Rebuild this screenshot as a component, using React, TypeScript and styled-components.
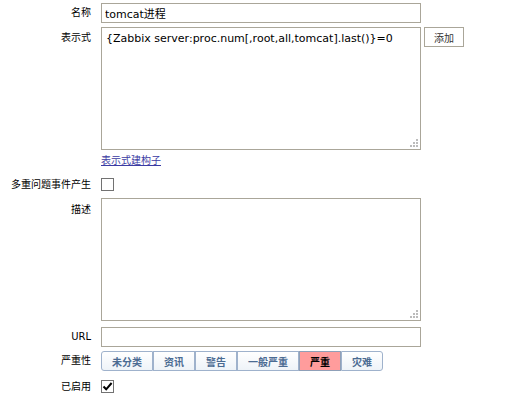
import React from 'react';
import styled, { createGlobalStyle } from 'styled-components';

const GlobalStyle = createGlobalStyle`
  html, body {
    margin: 0;
    padding: 0;
    background: #ffffff;
  }
  body {
    font-family: "DejaVu Sans", "Noto Sans CJK SC", sans-serif;
    font-size: 11px;
    color: #000;
  }
`;

const Form = styled.div`
  padding-top: 3px;
  width: 510px;
`;

const Row = styled.div<{ $top?: number; $center?: boolean }>`
  display: grid;
  grid-template-columns: 91px auto;
  column-gap: 10px;
  align-items: ${(p) => (p.$center ? 'center' : 'start')};
  margin-top: ${(p) => p.$top ?? 0}px;
`;

const Label = styled.div<{ $pad?: number }>`
  text-align: right;
  font-size: 10px;
  line-height: 12px;
  padding-top: ${(p) => p.$pad ?? 0}px;
  white-space: nowrap;
  font-family: "DejaVu Sans", "Noto Sans CJK SC", sans-serif;
`;

const Field = styled.div`
  display: flex;
  align-items: flex-start;
  gap: 2px;
`;

const TextInput = styled.input`
  box-sizing: border-box;
  width: 320px;
  height: 20px;
  margin: 0;
  padding: 0 3px;
  border: 1px solid #aaa699;
  font-family: "DejaVu Sans", "Noto Sans CJK SC", sans-serif;
  font-size: 11px;
  color: #000;
  background: #fff;
  outline: none;
`;

const AreaWrap = styled.div`
  position: relative;
  width: 320px;
  height: 123px;
`;

const Area = styled.textarea`
  box-sizing: border-box;
  width: 100%;
  height: 100%;
  margin: 0;
  padding: 4px 4px;
  border: 1px solid #aaa699;
  font-family: "DejaVu Sans", "Noto Sans CJK SC", sans-serif;
  font-size: 11px;
  line-height: 14px;
  color: #000;
  background: #fff;
  resize: none;
  outline: none;
  display: block;
`;

const Grip = styled.svg`
  position: absolute;
  right: 3px;
  bottom: 3px;
  width: 8px;
  height: 8px;
`;

const PlainButton = styled.button`
  box-sizing: border-box;
  height: 20px;
  width: 40px;
  margin: 0 0 0 1px;
  padding: 0;
  border: 1px solid #aaa699;
  background: #fff;
  color: #333;
  font-family: "DejaVu Sans", "Noto Sans CJK SC", sans-serif;
  font-size: 10px;
`;

const BuilderLink = styled.a`
  display: inline-block;
  font-size: 10px;
  line-height: 14px;
  color: #3b3ba3;
  text-decoration: underline;
  cursor: pointer;
`;

const Check = styled.span`
  box-sizing: border-box;
  display: inline-flex;
  align-items: center;
  justify-content: center;
  width: 13px;
  height: 13px;
  border: 1px solid #727272;
  background: #fff;
`;

const Segments = styled.div`
  display: flex;
`;

const Segment = styled.button<{ $active?: boolean }>`
  box-sizing: border-box;
  height: 20px;
  margin: 0;
  padding: 0 10px;
  border: 1px solid ${(p) => (p.$active ? '#8fa0b8' : '#9fb2cc')};
  background: ${(p) =>
    p.$active ? '#ff9c9c' : 'linear-gradient(#ffffff, #eef3f8)'};
  color: ${(p) => (p.$active ? '#000' : '#4b6b92')};
  font-family: "DejaVu Sans", "Noto Sans CJK SC", sans-serif;
  font-size: 10px;
  font-weight: bold;
  &:first-child {
    border-radius: 3px 0 0 3px;
  }
  &:last-child {
    border-radius: 0 3px 3px 0;
  }
`;

function ResizeGrip() {
  const dots = [
    [6, 0],
    [3, 3],
    [6, 3],
    [0, 6],
    [3, 6],
    [6, 6],
  ];
  return (
    <Grip viewBox="0 0 8 8">
      {dots.map(([x, y]) => (
        <rect key={`${x}-${y}`} x={x} y={y} width={2} height={2} fill="#bcbcbc" />
      ))}
    </Grip>
  );
}

const severities = ['未分类', '资讯', '警告', '一般严重', '严重', '灾难'];

export default function App() {
  return (
    <>
      <GlobalStyle />
      <Form>
        <Row $center>
          <Label>名称</Label>
          <Field>
            <TextInput defaultValue="tomcat进程" />
          </Field>
        </Row>
        <Row $top={4}>
          <Label $pad={5}>表示式</Label>
          <Field>
            <AreaWrap>
              <Area defaultValue="{Zabbix server:proc.num[,root,all,tomcat].last()}=0" />
              <ResizeGrip />
            </AreaWrap>
            <PlainButton>添加</PlainButton>
          </Field>
        </Row>
        <Row $top={4}>
          <Label />
          <Field>
            <BuilderLink>表示式建构子</BuilderLink>
          </Field>
        </Row>
        <Row $top={10} $center>
          <Label>多重问题事件产生</Label>
          <Field>
            <Check />
          </Field>
        </Row>
        <Row $top={7}>
          <Label $pad={6}>描述</Label>
          <Field>
            <AreaWrap>
              <Area />
              <ResizeGrip />
            </AreaWrap>
          </Field>
        </Row>
        <Row $top={6} $center>
          <Label>URL</Label>
          <Field>
            <TextInput />
          </Field>
        </Row>
        <Row $top={4} $center>
          <Label>严重性</Label>
          <Segments>
            {severities.map((s) => (
              <Segment key={s} $active={s === '严重'}>
                {s}
              </Segment>
            ))}
          </Segments>
        </Row>
        <Row $top={9} $center>
          <Label>已启用</Label>
          <Field>
            <Check>
              <svg width="11" height="11" viewBox="0 0 11 11">
                <path d="M1.5 5.5 L4.2 8.3 L9.6 2" fill="none" stroke="#000" strokeWidth="2" />
              </svg>
            </Check>
          </Field>
        </Row>
      </Form>
    </>
  );
}
